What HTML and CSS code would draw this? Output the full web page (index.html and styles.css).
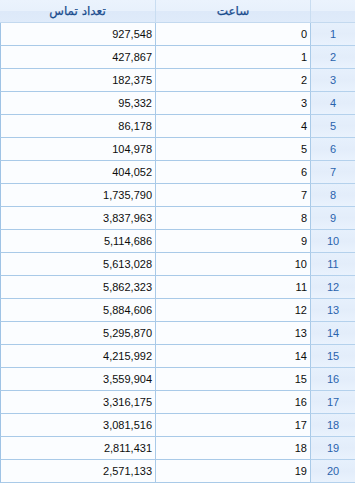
FILE: index.html
```html
<!DOCTYPE html>
<html lang="fa">
<head>
<meta charset="utf-8">
<link rel="stylesheet" href="styles.css">
</head>
<body>
<table class="grid" dir="rtl">
  <thead>
    <tr>
      <th class="c-num"></th>
      <th class="c-hour">ساعت</th>
      <th class="c-count">تعداد تماس</th>
    </tr>
  </thead>
  <tbody>
    <tr><td class="c-num">1</td><td class="c-hour">0</td><td class="c-count">927,548</td></tr>
    <tr><td class="c-num">2</td><td class="c-hour">1</td><td class="c-count">427,867</td></tr>
    <tr><td class="c-num">3</td><td class="c-hour">2</td><td class="c-count">182,375</td></tr>
    <tr><td class="c-num">4</td><td class="c-hour">3</td><td class="c-count">95,332</td></tr>
    <tr><td class="c-num">5</td><td class="c-hour">4</td><td class="c-count">86,178</td></tr>
    <tr><td class="c-num">6</td><td class="c-hour">5</td><td class="c-count">104,978</td></tr>
    <tr><td class="c-num">7</td><td class="c-hour">6</td><td class="c-count">404,052</td></tr>
    <tr><td class="c-num">8</td><td class="c-hour">7</td><td class="c-count">1,735,790</td></tr>
    <tr><td class="c-num">9</td><td class="c-hour">8</td><td class="c-count">3,837,963</td></tr>
    <tr><td class="c-num">10</td><td class="c-hour">9</td><td class="c-count">5,114,686</td></tr>
    <tr><td class="c-num">11</td><td class="c-hour">10</td><td class="c-count">5,613,028</td></tr>
    <tr><td class="c-num">12</td><td class="c-hour">11</td><td class="c-count">5,862,323</td></tr>
    <tr><td class="c-num">13</td><td class="c-hour">12</td><td class="c-count">5,884,606</td></tr>
    <tr><td class="c-num">14</td><td class="c-hour">13</td><td class="c-count">5,295,870</td></tr>
    <tr><td class="c-num">15</td><td class="c-hour">14</td><td class="c-count">4,215,992</td></tr>
    <tr><td class="c-num">16</td><td class="c-hour">15</td><td class="c-count">3,559,904</td></tr>
    <tr><td class="c-num">17</td><td class="c-hour">16</td><td class="c-count">3,316,175</td></tr>
    <tr><td class="c-num">18</td><td class="c-hour">17</td><td class="c-count">3,081,516</td></tr>
    <tr><td class="c-num">19</td><td class="c-hour">18</td><td class="c-count">2,811,431</td></tr>
    <tr><td class="c-num">20</td><td class="c-hour">19</td><td class="c-count">2,571,133</td></tr>
  </tbody>
</table>
</body>
</html>
```

FILE: styles.css
```css
html, body {
  margin: 0;
  padding: 0;
  background: #ffffff;
}

.grid {
  border-collapse: separate;
  border-spacing: 0;
  width: 355px;
  table-layout: fixed;
  font-family: "Liberation Sans", Arial, sans-serif;
  font-size: 11px;
}

.grid th {
  height: 22px;
  padding: 0;
  font-family: "DejaVu Sans", "Noto Sans", sans-serif;
  font-weight: normal;
  font-size: 12px;
  color: #1a4c8e;
  text-align: center;
  vertical-align: middle;
  background: linear-gradient(to bottom, #ebf3fd 0%, #e8f1fc 48%, #dde9f9 52%, #dfebfa 100%);
  border-bottom: 1px solid #c3d9ef;
  border-left: 1px solid #c9ddf1;
  -webkit-text-stroke: 0.25px #1a4c8e;
}

.grid th.c-count {
  border-left: none;
}

.grid td {
  height: 22px;
  padding: 0 3px;
  border-bottom: 1px solid #a9cae8;
  border-left: 1px solid #a9cae8;
  background: #fbfdff;
  color: #0d0d0d;
  text-align: right;
  vertical-align: middle;
  white-space: nowrap;
}

.grid td.c-count {
  border-left: 1px solid #9fc3e5;
}

.grid .c-num {
  width: 44px;
}

.grid th.c-hour {
  width: 154px;
}

.grid td.c-hour {
  width: 148px;
}

.grid td.c-num {
  padding: 0;
  text-align: center;
  color: #2a63ad;
  font-size: 11px;
  background: linear-gradient(to bottom, #e6f0fc 0%, #e3edfa 50%, #e9f2fd 100%);
  border-bottom: 1px solid #b4d1ec;
}
```
